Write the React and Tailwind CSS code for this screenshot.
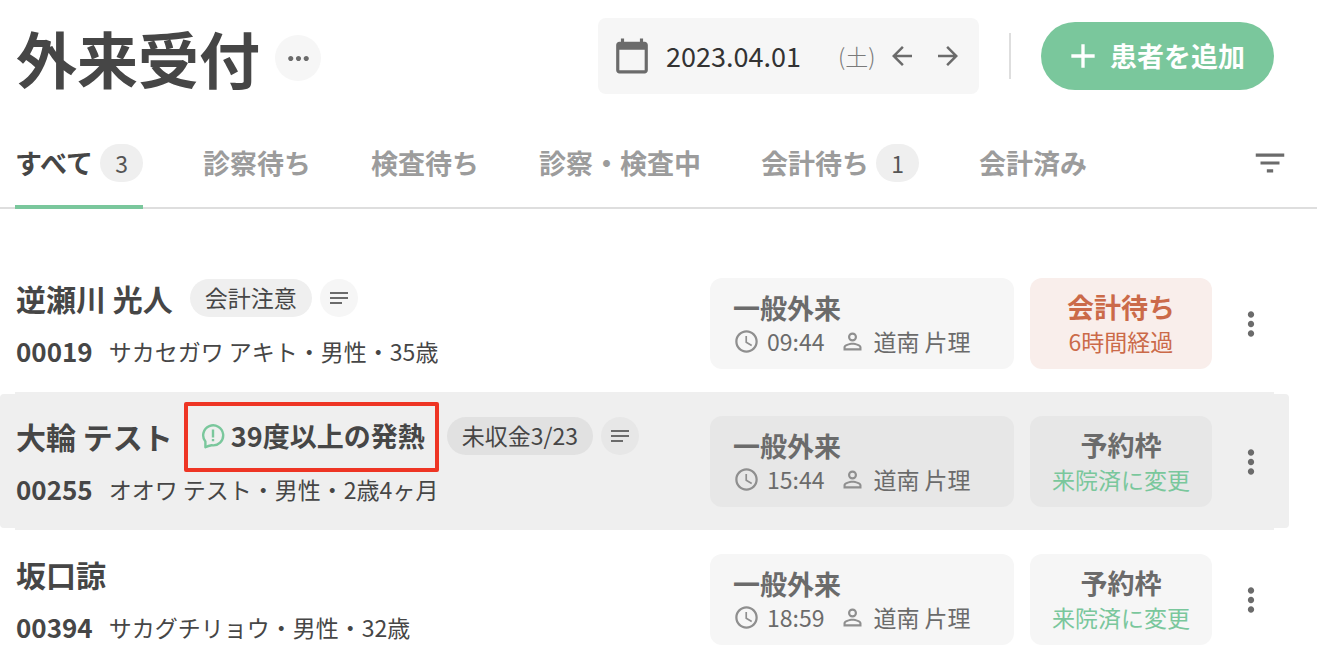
import clsx from 'clsx'
import {
  MdAccessTime,
  MdAdd,
  MdArrowBack,
  MdArrowForward,
  MdCalendarToday,
  MdFilterList,
  MdMoreHoriz,
  MdMoreVert,
  MdNotes,
  MdPersonOutline,
} from 'react-icons/md'

const tabs = [
  { label: 'すべて', count: 3, active: true },
  { label: '診察待ち' },
  { label: '検査待ち' },
  { label: '診察・検査中' },
  { label: '会計待ち', count: 1 },
  { label: '会計済み' },
]

const patients = [
  {
    id: '00019',
    name: '逆瀬川 光人',
    detail: 'サカセガワ アキト・男性・35歳',
    tag: '会計注意',
    time: '09:44',
    status: '会計待ち',
    note: '6時間経過',
    alert: true,
  },
  {
    id: '00255',
    name: '大輪 テスト',
    detail: 'オオワ テスト・男性・2歳4ヶ月',
    message: '39度以上の発熱',
    tag: '未収金3/23',
    time: '15:44',
    status: '予約枠',
    note: '来院済に変更',
    selected: true,
  },
  {
    id: '00394',
    name: '坂口諒',
    detail: 'サカグチリョウ・男性・32歳',
    time: '18:59',
    status: '予約枠',
    note: '来院済に変更',
  },
]

function MessageIcon() {
  return (
    <svg width="24" height="26" viewBox="0 0 24 26" fill="none" stroke="#7ac79c" strokeWidth="2.4" className="shrink-0">
      <path d="M4.4 24.2V18.6A10 10 0 1 1 10.6 22.2Q7.4 22.6 4.4 24.2Z" strokeLinejoin="round" />
      <path d="M12 6.4v8M12 16v2.2" />
    </svg>
  )
}

function Header() {
  return (
    <header className="flex items-center pt-[18px] pl-4 pr-[43px]">
      <div className="flex items-center pt-1">
        <h1 className="text-[61px] leading-[72px] font-bold text-[#464646]">外来受付</h1>
        <button
          aria-label="その他"
          className="ml-[15px] flex size-[46px] items-center justify-center rounded-full bg-[#f6f6f6] text-[#6b6b6b]"
        >
          <MdMoreHoriz size={31} />
        </button>
      </div>

      <div className="ml-auto flex h-[76px] w-[381px] items-center rounded-lg bg-[#f6f6f6] pl-[15px] pr-4 text-[#6b6b6b]">
        <label htmlFor="date" aria-label="日付">
          <MdCalendarToday size={38} />
        </label>
        <input
          id="date"
          type="text"
          defaultValue="2023.04.01"
          className="ml-[15px] w-[160px] bg-transparent text-[27px] leading-9 text-[#333] outline-none"
        />
        <span className="ml-3 text-[23px] font-light text-[#7a7a7a]">(土)</span>
        <button aria-label="前の日" className="ml-auto">
          <MdArrowBack size={30} />
        </button>
        <button aria-label="次の日" className="ml-4">
          <MdArrowForward size={30} />
        </button>
      </div>

      <div className="mx-[30px] h-[46px] w-[2px] bg-[#dedede]" />

      <button className="flex h-[68px] w-[233px] items-center gap-[7px] rounded-full bg-[#7ac79c] pl-[22px] text-[27px] font-bold text-white">
        <MdAdd size={40} />
        患者を追加
      </button>
    </header>
  )
}

function Tabs() {
  return (
    <nav className="flex items-start border-b-2 border-[#dedede] pt-[50px] pl-[15px] pr-7">
      <div className="-mb-[2px] flex gap-15">
        {tabs.map((tab) => (
          <button
            key={tab.label}
            className={clsx(
              'flex items-center gap-[7px] border-b-4 pb-[23px] text-[27px] leading-[38px] font-bold',
              tab.active ? 'border-[#7ac79c] text-[#464646]' : 'border-transparent text-[#9c9c9c]'
            )}
          >
            {tab.label}
            {tab.count && (
              <span className="w-[43px] rounded-full bg-[#efefef] text-center text-[23px] leading-[38px] font-normal text-[#555]">
                {tab.count}
              </span>
            )}
          </button>
        ))}
      </div>
      <button aria-label="絞り込み" className="ml-auto text-[#6b6b6b]">
        <MdFilterList size={38} />
      </button>
    </nav>
  )
}

function PatientRow({ patient }) {
  const { selected, alert } = patient
  const cardBg = selected ? 'bg-[#e7e7e7]' : 'bg-[#f6f6f6]'

  return (
    <li
      className={clsx(
        'relative isolate flex pt-6 pb-[23px] pl-4 pr-[19px] last:pb-0',
        selected &&
          "before:absolute before:inset-x-0 before:inset-y-[2px] before:-z-10 before:rounded before:bg-[#efefef] before:content-[''] after:absolute after:inset-x-[15px] after:inset-y-0 after:-z-10 after:bg-[#efefef] after:content-['']"
      )}
    >
      <div className="min-w-0 flex-1 pt-px whitespace-nowrap text-[#464646]">
        <div className="flex items-center gap-2">
          <h2 className="mr-[9px] text-[30px] leading-[38px] font-bold">{patient.name}</h2>
          {patient.message && (
            <div className="relative flex items-center gap-[6px] pr-[14px] pl-[11px] text-[27px] leading-[38px] font-bold">
              <MessageIcon />
              {patient.message}
              <span className="absolute -top-[15px] right-0 -bottom-[17px] -left-[6px] rounded-xs border-4 border-[#ee3524]" />
            </div>
          )}
          {patient.tag && (
            <>
              <span
                className={clsx(
                  'h-[38px] rounded-full px-[15px] text-[23px] leading-9',
                  selected ? 'bg-[#e1e1e1]' : 'bg-[#efefef]'
                )}
              >
                {patient.tag}
              </span>
              <button
                aria-label="メモ"
                className={clsx('flex size-[38px] items-center justify-center rounded-full text-[#6b6b6b]', cardBg)}
              >
                <MdNotes size={24} />
              </button>
            </>
          )}
        </div>
        <p className="mt-[18px] flex items-center text-[23px] leading-8">
          <span className="mr-4 text-[26px] font-bold">{patient.id}</span>
          {patient.detail}
        </p>
      </div>

      <div className={clsx('h-[91px] w-[304px] rounded-xl pt-[14px] pl-[23px] text-[#6b6b6b]', cardBg)}>
        <p className="text-[27px] leading-8 font-bold">一般外来</p>
        <p className="flex items-center text-[23px] leading-[34px]">
          <MdAccessTime size={27} className="mr-[7px] text-[#8f8f8f]" />
          {patient.time}
          <MdPersonOutline size={27} className="mr-[7px] ml-[15px] text-[#8f8f8f]" />
          道南 片理
        </p>
      </div>

      <button
        className={clsx(
          'ml-4 h-[91px] w-[182px] rounded-xl pt-3 pb-[11px]',
          alert ? 'bg-[#f9eeeb] text-[#cb6a49]' : [cardBg, 'text-[#6b6b6b]']
        )}
      >
        <span className="block text-[27px] leading-[34px] font-bold">{patient.status}</span>
        <span className={clsx('block text-[23px] leading-[34px]', !alert && 'text-[#7ac79c]')}>{patient.note}</span>
      </button>

      <button aria-label="メニュー" className="ml-5 text-[#6b6b6b]">
        <MdMoreVert size={38} />
      </button>
    </li>
  )
}

export default function App() {
  return (
    <main className="bg-white font-['Noto_Sans_CJK_JP',sans-serif]">
      <Header />
      <Tabs />
      <ul className="mr-7 pt-[45px]">
        {patients.map((patient) => (
          <PatientRow key={patient.id} patient={patient} />
        ))}
      </ul>
    </main>
  )
}
